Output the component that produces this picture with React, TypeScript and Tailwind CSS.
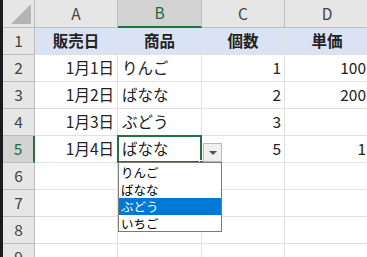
const font = { fontFamily: '"Noto Sans CJK JP", "Noto Sans", sans-serif' };

const cols = ["A", "B", "C", "D"];

const rows: string[][] = [
  ["販売日", "商品", "個数", "単価"],
  ["1月1日", "りんご", "1", "100"],
  ["1月2日", "ばなな", "2", "200"],
  ["1月3日", "ぶどう", "3", ""],
  ["1月4日", "ばなな", "5", "1"],
  ["", "", "", ""],
  ["", "", "", ""],
  ["", "", "", ""],
  ["", "", "", ""],
];

const options = ["りんご", "ばなな", "ぶどう", "いちご"];

export default function App() {
  return (
    <div className="relative w-[367px] h-[257px] overflow-hidden bg-white border-l-[3px] border-[#1b1b1b]" style={font}>
      <div className="grid grid-cols-[32px_83px_84px_83px_85px] grid-rows-[28px_repeat(9,27px)] text-[15.5px] text-[#222]">
        {/* corner */}
        <div className="relative bg-[#e6e6e6] border-r border-b border-[#bdbdbd]">
          <div className="absolute right-[3px] bottom-[3px] w-0 h-0 border-l-[20px] border-l-transparent border-b-[20px] border-b-[#b4b4b4]" />
        </div>
        {cols.map((c) =>
          c === "B" ? (
            <div key={c} className="flex items-center justify-center bg-[#d3d3d3] border-r border-[#bdbdbd] border-b-2 border-b-[#217346] text-[#1f6b40]">
              {c}
            </div>
          ) : (
            <div key={c} className="flex items-center justify-center bg-[#e6e6e6] border-r border-b border-[#bdbdbd] text-[#444]">
              {c}
            </div>
          )
        )}
        {rows.map((r, i) => {
          const n = i + 1;
          const sel = n === 5;
          return [
            <div
              key={`h${n}`}
              className={
                sel
                  ? "flex items-center justify-center bg-[#d3d3d3] border-b border-[#bdbdbd] border-r-2 border-r-[#217346] text-[#1f6b40]"
                  : "flex items-center justify-center bg-[#e6e6e6] border-r border-b border-[#bdbdbd] text-[#444]"
              }
            >
              {n}
            </div>,
            ...r.map((v, j) => {
              const header = n === 1;
              const align = header ? "justify-center font-bold" : j === 1 ? "justify-start pl-[4px]" : "justify-end pr-[3px]";
              return (
                <div
                  key={`c${n}-${j}`}
                  className={`relative flex items-center whitespace-nowrap border-r border-b border-[#e1e1e1] ${align} ${header ? "bg-[#dae3f3]" : ""}`}
                >
                  {v}
                  {sel && j === 1 && (
                    <div className="absolute -left-px -top-px -right-px -bottom-px border-2 border-[#217346]">
                      <div className="absolute -right-[4px] -bottom-[4px] w-[5px] h-[5px] bg-[#217346] border border-white" />
                    </div>
                  )}
                </div>
              );
            }),
          ];
        })}
      </div>

      {/* dropdown button */}
      <div className="absolute left-[200px] top-[143px] w-[19px] h-[19px] bg-[#f0f0f0] border border-[#b9b9b9] flex items-center justify-center">
        <div className="w-0 h-0 border-l-[4px] border-r-[4px] border-t-[4px] border-l-transparent border-r-transparent border-t-[#555]" />
      </div>

      {/* dropdown list */}
      <div className="absolute left-[115px] top-[162px] w-[104px] h-[70px] bg-white border border-[#7a7a7a] text-[12.5px] text-black pt-px">
        {options.map((o) => (
          <div
            key={o}
            className={
              o === "ぶどう"
                ? "h-[17px] leading-[17px] overflow-hidden px-[2px] bg-[#0078d7] text-white"
                : "h-[17px] leading-[17px] overflow-hidden px-[2px]"
            }
          >
            {o}
          </div>
        ))}
      </div>
    </div>
  );
}
